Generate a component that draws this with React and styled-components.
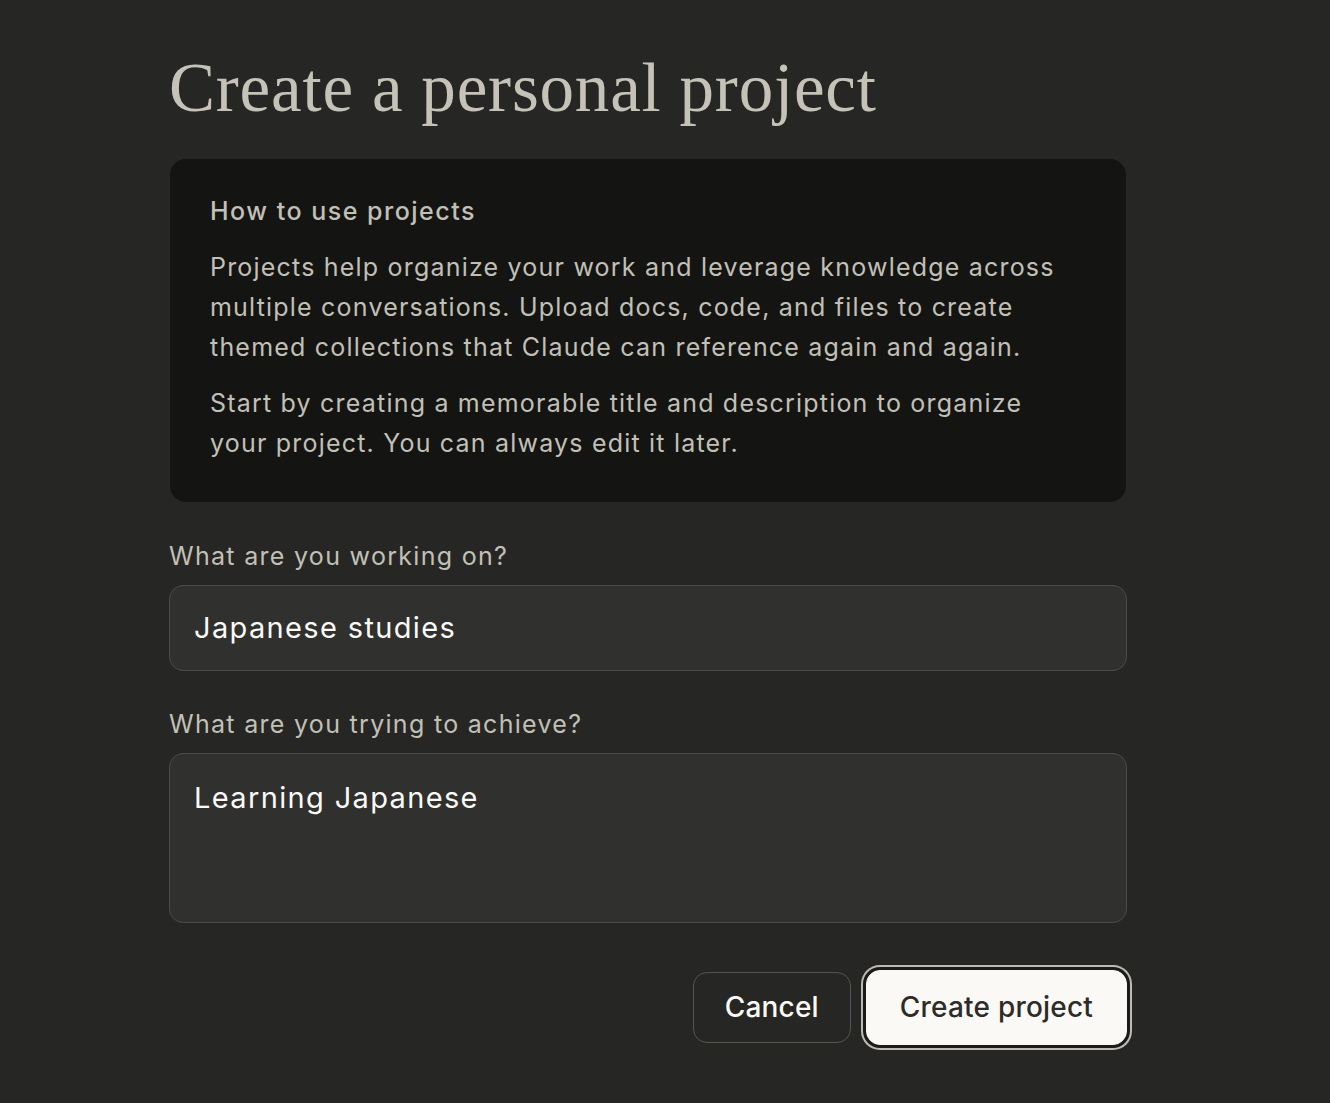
import React from "react";
import styled, { createGlobalStyle } from "styled-components";

const GlobalStyle = createGlobalStyle`
  html, body {
    margin: 0;
    padding: 0;
    background: #262624;
  }
  body {
    font-family: Inter, "Noto Sans", "Liberation Sans", sans-serif;
    -webkit-font-smoothing: antialiased;
  }
  * { box-sizing: border-box; }
`;

const Page = styled.main`
  min-height: 1103px;
  padding: 51px 0 40px 169px;
`;

const Form = styled.form`
  width: 958px;
  display: flex;
  flex-direction: column;
`;

const Title = styled.h1`
  margin: 0 0 32px;
  font-family: "Liberation Serif", "DejaVu Serif", serif;
  font-weight: 400;
  font-size: 69px;
  line-height: 1.1;
  letter-spacing: 0.8px;
  color: #c5c2b8;
`;

const InfoCard = styled.section`
  background: #141413;
  border-radius: 16px;
  margin: 0 1px;
  padding: 32px 60px 39px 40px;
  display: flex;
  flex-direction: column;
  gap: 16px;
  color: #c2c0b6;
`;

const CardTitle = styled.h2`
  margin: 0;
  font-size: 25px;
  font-weight: 500;
  line-height: 40px;
  letter-spacing: 1.5px;
`;

const CardText = styled.p`
  margin: 0;
  font-size: 25px;
  font-weight: 400;
  line-height: 40px;
  letter-spacing: 1.2px;
`;

const Field = styled.label`
  display: flex;
  flex-direction: column;
  gap: 13px;
  margin-top: ${(p) => p.$top}px;
`;

const LabelText = styled.span`
  font-size: 25px;
  line-height: 32px;
  letter-spacing: 1.3px;
  color: #c2c0b6;
`;

const fieldBase = `
  width: 100%;
  background: #30302e;
  border: 1px solid #4b4a46;
  border-radius: 14px;
  color: #faf9f5;
  font-family: Inter, "Noto Sans", "Liberation Sans", sans-serif;
  font-size: 29px;
  letter-spacing: 1.35px;
  outline: none;
`;

const TextInput = styled.input`
  ${fieldBase}
  height: 86px;
  padding: 0 24px;
`;

const TextArea = styled.textarea`
  ${fieldBase}
  height: 170px;
  padding: 26px 24px;
  line-height: 36px;
  resize: none;
`;

const Actions = styled.div`
  display: flex;
  justify-content: flex-end;
  align-items: center;
  gap: 15px;
  margin-top: 47px;
`;

const Button = styled.button`
  font-family: Inter, "Noto Sans", "Liberation Sans", sans-serif;
  font-size: 28px;
  font-weight: 500;
  letter-spacing: 0.2px;
  border-radius: 14px;
  cursor: pointer;
  padding: 0 ${(p) => (p.$primary ? 33 : 31)}px;
  height: ${(p) => (p.$primary ? 75 : 71)}px;
  background: ${(p) => (p.$primary ? "#faf9f5" : "transparent")};
  color: ${(p) => (p.$primary ? "#2d2c29" : "#faf9f5")};
  border: 1px solid ${(p) => (p.$primary ? "#faf9f5" : "#55544f")};
  box-shadow: ${(p) =>
    p.$primary ? "0 0 0 3px #1b1b19, 0 0 0 5px #bdbbb3" : "none"};
`;

export default function App() {
  return (
    <>
      <GlobalStyle />
      <Page>
        <Form onSubmit={(e) => e.preventDefault()}>
          <Title>Create a personal project</Title>
          <InfoCard>
            <CardTitle>How to use projects</CardTitle>
            <CardText>
              Projects help organize your work and leverage knowledge across
              multiple conversations. Upload docs, code, and files to create
              themed collections that Claude can reference again and again.
            </CardText>
            <CardText>
              Start by creating a memorable title and description to organize
              your project. You can always edit it later.
            </CardText>
          </InfoCard>
          <Field $top={38}>
            <LabelText>What are you working on?</LabelText>
            <TextInput defaultValue="Japanese studies" />
          </Field>
          <Field $top={37}>
            <LabelText>What are you trying to achieve?</LabelText>
            <TextArea defaultValue="Learning Japanese" />
          </Field>
          <Actions>
            <Button type="button">Cancel</Button>
            <Button type="submit" $primary>
              Create project
            </Button>
          </Actions>
        </Form>
      </Page>
    </>
  );
}
